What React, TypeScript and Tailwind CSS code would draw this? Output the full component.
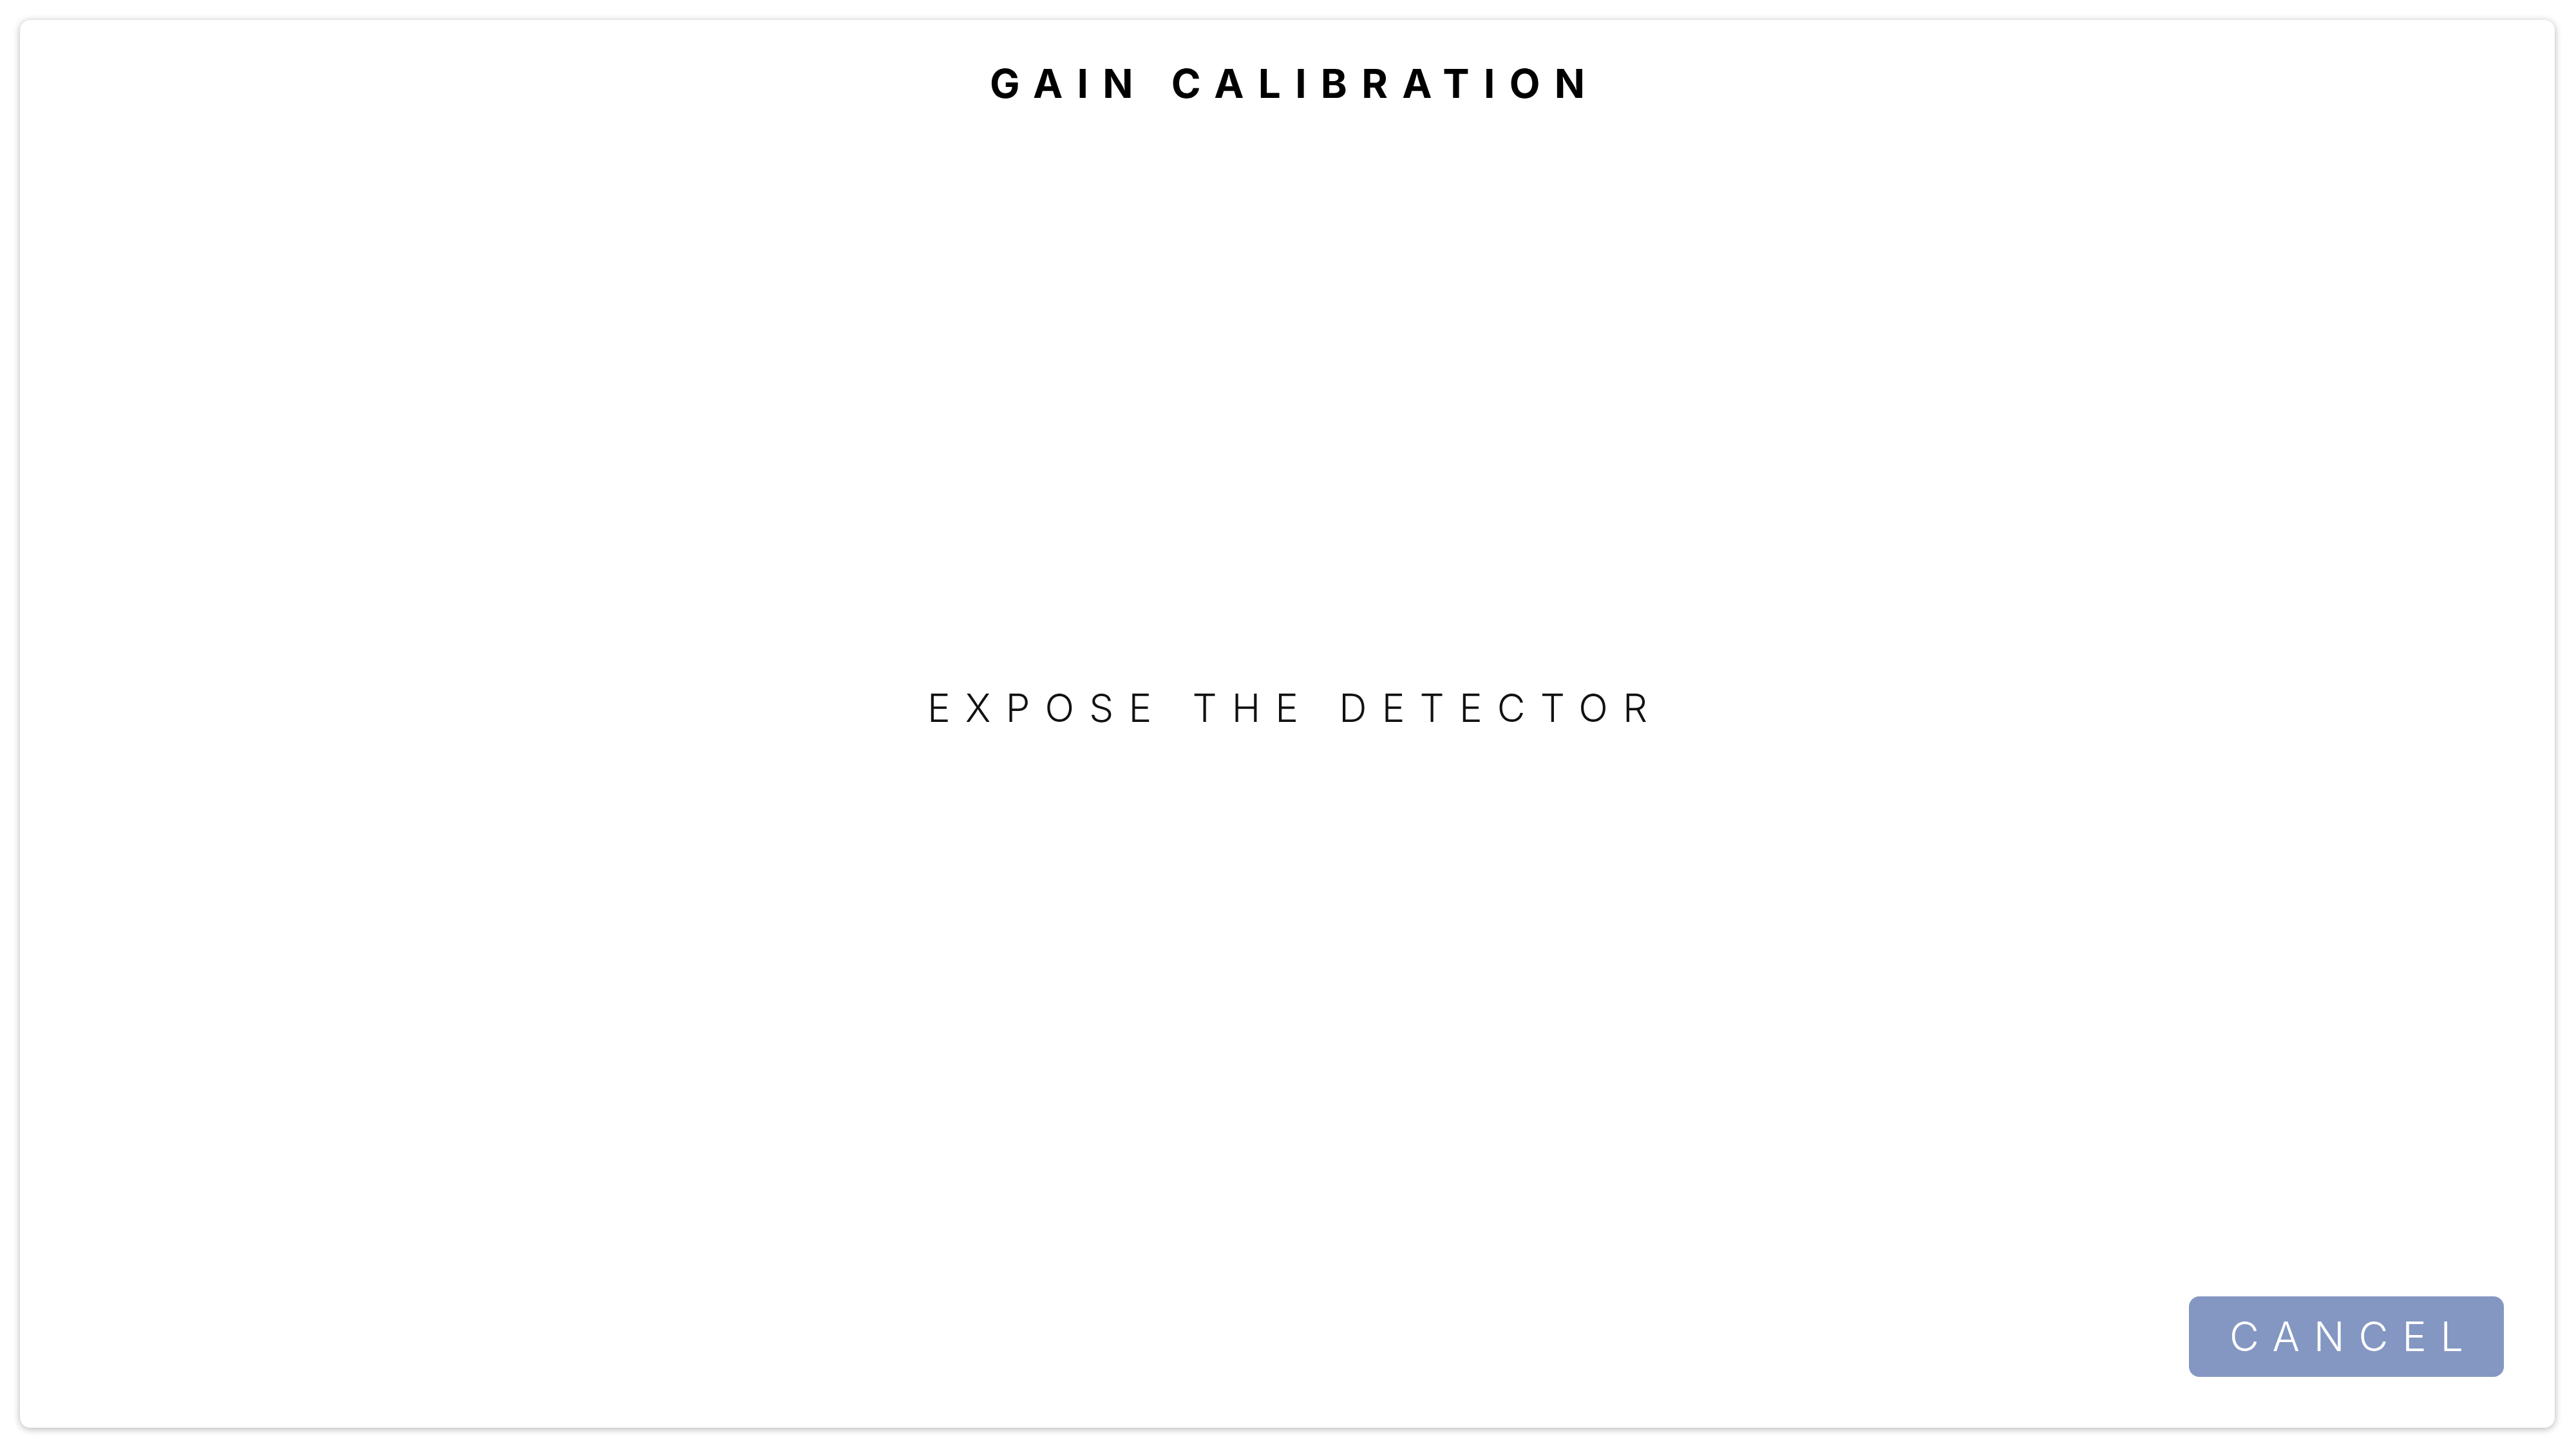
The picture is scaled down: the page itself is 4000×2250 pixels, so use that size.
import React from "react";

export default function App() {
  return (
    <div className="w-[4000px] h-[2250px] bg-white pl-[31px] pt-[31px] font-['Inter','Liberation_Sans',sans-serif]">
      <div className="w-[3936px] h-[2186px] bg-white rounded-[16px] shadow-[0_2px_12px_rgba(0,0,0,0.3)] flex flex-col">
        <div className="pt-[68px] flex justify-center">
          <h1 className="text-[62px] leading-none font-bold tracking-[22.3px] mr-[-22.3px] text-black">
            GAIN CALIBRATION
          </h1>
        </div>
        <div className="flex-1 flex items-center justify-center pt-[24px]">
          <p className="text-[60px] leading-none font-[350] tracking-[23.2px] mr-[-23.2px] text-[#111]">
            EXPOSE THE DETECTOR
          </p>
        </div>
        <div className="flex justify-end pr-[79px] pb-[79px]">
          <button className="w-[489px] h-[125px] rounded-[16px] bg-[#8497c2] flex items-center justify-center">
            <span className="text-[63px] leading-none font-light text-white tracking-[21.8px] mr-[-21.8px]">
              CANCEL
            </span>
          </button>
        </div>
      </div>
    </div>
  );
}
